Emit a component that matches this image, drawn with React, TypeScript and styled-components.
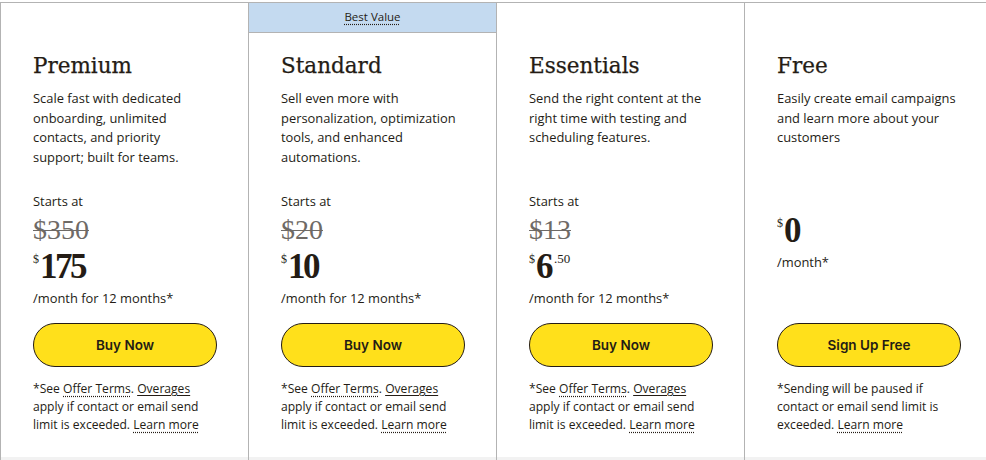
import React from "react";
import styled, { createGlobalStyle } from "styled-components";

const Global = createGlobalStyle`
  html, body { margin: 0; padding: 0; background: #ffffff; }
  body { font-family: "Open Sans", "Liberation Sans", Arial, sans-serif; color: #241c15; }
`;

const Page = styled.div`
  width: 986px;
  height: 460px;
  overflow: hidden;
  padding-top: 2px;
  box-sizing: border-box;
  display: flex;
  flex-direction: column;
`;

const Grid = styled.div`
  display: grid;
  grid-template-columns: repeat(4, 248px);
  border-top: 1px solid #b3b3b3;
  flex: 0 0 auto;
  height: 454px;
`;

const Strip = styled.div`
  flex: 1;
  background: #f2f2f2;
  display: grid;
  grid-template-columns: repeat(4, 248px);
`;

const StripCell = styled.div`
  border-left: 1px solid #b3b3b3;
`;

const Card = styled.div`
  border-left: 1px solid #b3b3b3;
  display: flex;
  flex-direction: column;
  background: #fff;
`;

const Banner = styled.div<{ $show: boolean }>`
  height: 30px;
  box-sizing: border-box;
  background: ${(p) => (p.$show ? "#c4daf0" : "transparent")};
  border-bottom: 1px solid ${(p) => (p.$show ? "#b3b3b3" : "transparent")};
  display: flex;
  align-items: center;
  justify-content: center;
  font-size: 11.5px;
  color: #241c15;
`;

const BannerText = styled.span`
  text-decoration: underline dotted #241c15;
  text-underline-offset: 3px;
  line-height: 13px;
  margin-top: -3px;
`;

const Body = styled.div`
  padding: 19px 31px 0 32px;
  display: flex;
  flex-direction: column;
`;

const Title = styled.h2`
  margin: 0;
  font-family: "DejaVu Serif", "Liberation Serif", serif;
  font-weight: 400;
  font-size: 21.5px;
  line-height: 28px;
  color: #241c15;
  -webkit-text-stroke: 0.25px #241c15;
`;

const Desc = styled.p`
  margin: 9px 0 0;
  max-width: 179.5px;
  font-size: 12.9px;
  line-height: 19.5px;
  height: 78px;
  color: #241c15;
`;

const PriceArea = styled.div`
  height: 141px;
  display: flex;
  flex-direction: column;
`;

const StartsAt = styled.div<{ $hidden?: boolean }>`
  margin-top: 25px;
  font-size: 12.9px;
  line-height: 19px;
  visibility: ${(p) => (p.$hidden ? "hidden" : "visible")};
`;

const Strike = styled.div`
  margin-top: 4px;
  font-family: "Liberation Serif", serif;
  font-size: 28px;
  line-height: 30px;
  color: #6e6a66;
  text-decoration: line-through;
  text-decoration-thickness: 1px;
`;

const Price = styled.div<{ $free?: boolean }>`
  margin-top: ${(p) => (p.$free ? "2px" : "4px")};
  display: flex;
  align-items: flex-start;
  font-family: "Liberation Serif", serif;
  color: #241c15;
  height: 36px;
`;

const Currency = styled.span`
  font-size: 12px;
  line-height: 12px;
  margin-top: 4px;
  margin-right: 1px;
`;

const Amount = styled.span`
  font-size: 35px;
  line-height: 36px;
  font-weight: 700;
  letter-spacing: -2.5px;
`;

const Cents = styled.span`
  font-size: 13px;
  line-height: 13px;
  margin-top: 3px;
  margin-left: 3px;
`;

const Per = styled.div`
  margin-top: 4px;
  font-size: 12.9px;
  line-height: 19px;
`;

const Button = styled.button`
  margin-top: 15px;
  width: 184px;
  height: 44px;
  border-radius: 22px;
  border: 1px solid #241c15;
  background: #ffe01b;
  color: #241c15;
  font-family: Inter, "Liberation Sans", Arial, sans-serif;
  font-weight: 600;
  font-size: 13.5px;
  cursor: pointer;
  padding: 0;
`;

const Note = styled.p`
  margin: 13px 0 0;
  font-size: 12.1px;
  line-height: 18px;
  color: #241c15;
`;

const Dotted = styled.span`
  text-decoration: underline dotted #241c15;
  text-underline-offset: 3px;
`;

const Solid = styled.span`
  text-decoration: underline;
  text-underline-offset: 2px;
`;

type Plan = {
  name: string;
  desc: string;
  old?: string;
  amount: string;
  cents?: string;
  per: string;
  cta: string;
  best?: boolean;
  free?: boolean;
};

const plans: Plan[] = [
  {
    name: "Premium",
    desc: "Scale fast with dedicated onboarding, unlimited contacts, and priority support; built for teams.",
    old: "$350",
    amount: "175",
    per: "/month for 12 months*",
    cta: "Buy Now",
  },
  {
    name: "Standard",
    desc: "Sell even more with personalization, optimization tools, and enhanced automations.",
    old: "$20",
    amount: "10",
    per: "/month for 12 months*",
    cta: "Buy Now",
    best: true,
  },
  {
    name: "Essentials",
    desc: "Send the right content at the right time with testing and scheduling features.",
    old: "$13",
    amount: "6",
    cents: ".50",
    per: "/month for 12 months*",
    cta: "Buy Now",
  },
  {
    name: "Free",
    desc: "Easily create email campaigns and learn more about your customers",
    amount: "0",
    per: "/month*",
    cta: "Sign Up Free",
    free: true,
  },
];

export default function App() {
  return (
    <>
      <Global />
      <Page>
        <Grid>
          {plans.map((p) => (
            <Card key={p.name}>
              <Banner $show={!!p.best}>
                {p.best && <BannerText>Best Value</BannerText>}
              </Banner>
              <Body>
                <Title>{p.name}</Title>
                <Desc>{p.desc}</Desc>
                <PriceArea>
                  <StartsAt $hidden={p.free}>Starts at</StartsAt>
                  {p.old && <Strike>{p.old}</Strike>}
                  <Price $free={p.free}>
                    <Currency>$</Currency>
                    <Amount>{p.amount}</Amount>
                    {p.cents && <Cents>{p.cents}</Cents>}
                  </Price>
                  <Per>{p.per}</Per>
                </PriceArea>
                <Button>{p.cta}</Button>
                {p.free ? (
                  <Note>
                    *Sending will be paused if contact or email send limit is
                    exceeded. <Dotted>Learn more</Dotted>
                  </Note>
                ) : (
                  <Note>
                    *See <Dotted>Offer Terms</Dotted>. <Solid>Overages</Solid>{" "}
                    apply if contact or email send limit is exceeded.{" "}
                    <Dotted>Learn more</Dotted>
                  </Note>
                )}
              </Body>
            </Card>
          ))}
        </Grid>
        <Strip>
          <StripCell />
          <StripCell />
          <StripCell />
          <StripCell />
        </Strip>
      </Page>
    </>
  );
}
